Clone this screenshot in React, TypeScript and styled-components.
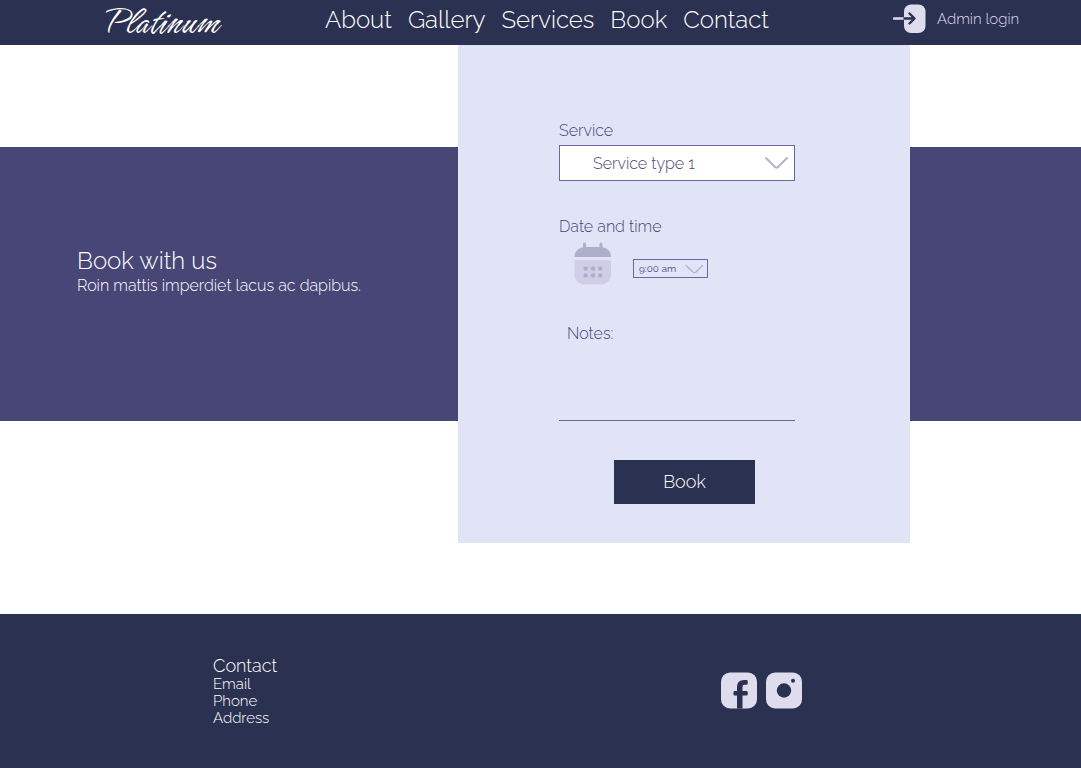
import React from 'react';
import styled, { createGlobalStyle } from 'styled-components';

const navy = '#2b3150';
const indigo = '#484677';
const lilac = '#e1e4f7';
const mist = '#dfdded';
const violet = '#6a68a3';

const GlobalStyle = createGlobalStyle`
  *, *::before, *::after { box-sizing: border-box; }
  body {
    margin: 0;
    background: #fff;
    font-family: Raleway, Lato, "Open Sans", sans-serif;
    font-weight: 300;
    font-size: 16px;
    line-height: 20px;
  }
  button, select, textarea { font: inherit; color: inherit; }
`;

const Page = styled.div`
  min-height: 100vh;
  display: flex;
  flex-direction: column;
`;

const Header = styled.header`
  display: grid;
  grid-template-columns: 325fr 568fr 188fr;
  align-items: center;
  min-height: 45px;
  background: ${navy};
  color: #fff;
`;

const Logo = styled.a`
  padding-left: 106px;
  color: #fff;
  font-family: Hurricane, "Brush Script MT", "Liberation Serif", cursive;
  font-weight: 400;
  font-size: 42px;
  line-height: 45px;
  text-decoration: none;
`;

const Nav = styled.nav`
  display: flex;
  gap: 16px;
  padding-bottom: 5px;
`;

const NavLink = styled.a`
  color: #fff;
  font-size: 24px;
  line-height: 30px;
  text-decoration: none;
`;

const LoginLink = styled.a`
  display: flex;
  align-items: center;
  gap: 11px;
  padding-bottom: 7px;
  color: ${mist};
  font-size: 15px;
  white-space: nowrap;
  text-decoration: none;
`;

const Main = styled.main`
  flex: 1;
  display: grid;
  grid-template-columns: 458fr 452fr 171fr;
  grid-template-rows: 102px 274px auto;
  padding-bottom: 71px;
`;

const Band = styled.section`
  grid-column: 1 / -1;
  grid-row: 2;
  display: flex;
  flex-direction: column;
  justify-content: center;
  padding: 0 0 26px 77px;
  background: ${indigo};
  color: #fff;
`;

const BandTitle = styled.h1`
  margin: 0;
  font-size: 24px;
  font-weight: 300;
  line-height: 30px;
`;

const BandText = styled.p`
  margin: 0;
`;

const BookingForm = styled.form`
  grid-column: 2;
  grid-row: 1 / 4;
  display: flex;
  flex-direction: column;
  padding: 76px 115px 39px 101px;
  background: ${lilac};
  color: ${indigo};
`;

const Field = styled.div<{ $space: number }>`
  display: flex;
  flex-direction: column;
  gap: 4px;
  margin-bottom: ${p => p.$space}px;
`;

const SelectBox = styled.div`
  display: grid;
  align-items: center;
  > * { grid-area: 1 / 1; }
  > svg { justify-self: end; pointer-events: none; }
`;

const ServiceSelect = styled.select`
  appearance: none;
  width: 100%;
  height: 36px;
  padding: 1px 40px 0 33px;
  border: 1px solid ${violet};
  border-radius: 0;
  background: #fff;
`;

const TimeSelect = styled.select`
  appearance: none;
  width: 75px;
  height: 19px;
  padding: 0 24px 0 5px;
  border: 1px solid ${violet};
  border-radius: 0;
  background: ${lilac};
  font-size: 10px;
  font-weight: 400;
  line-height: 16px;
`;

const DateRow = styled.div`
  display: flex;
  align-items: center;
  gap: 21px;
  padding-left: 15px;
  > ${SelectBox} { margin-top: 11px; }
`;

const CalendarButton = styled.button`
  display: block;
  padding: 0;
  border: 0;
  background: none;
  > svg { display: block; }
`;

const NotesLabel = styled.label`
  padding-left: 8px;
`;

const Notes = styled.textarea`
  height: 73px;
  padding: 0 8px;
  border: 0;
  border-bottom: 1px solid ${violet};
  border-radius: 0;
  background: transparent;
  resize: none;
`;

const BookButton = styled.button`
  width: 141px;
  height: 44px;
  margin-left: 55px;
  border: 0;
  background: ${navy};
  color: #fff;
  font-size: 18px;
`;

const Footer = styled.footer`
  display: grid;
  grid-template-columns: 721fr 360fr;
  align-items: center;
  min-height: 154px;
  background: ${navy};
  color: #fff;
`;

const ContactBlock = styled.div`
  padding-left: 213px;
`;

const ContactTitle = styled.h2`
  margin: 0;
  font-size: 18px;
  font-weight: 300;
  line-height: 20px;
`;

const ContactList = styled.ul`
  margin: 0;
  padding: 0;
  list-style: none;
  font-size: 15px;
  line-height: 17px;
`;

const Social = styled.div`
  display: flex;
  gap: 9px;
  padding-bottom: 1px;
  a, svg { display: block; }
`;

const Chevron = ({ small = false }: { small?: boolean }) => (
  <svg width={small ? 23 : 30} height={small ? 10 : 14} viewBox={small ? '0 0 23 10' : '0 0 30 14'} fill="none" stroke="#b3b2d0" strokeWidth={small ? 1.3 : 2} strokeLinecap="round" aria-hidden="true">
    <path d={small ? 'M1 1.5 L8 8 Q9.500 9.200 11 8 L17.500 1.5' : 'M1 2 L9.500 10.500 Q11.500 12.800 13.500 10.500 L22 2'} />
  </svg>
);

const LoginIcon = () => (
  <svg width="33" height="30" viewBox="0 0 33 30" fill="none" aria-hidden="true">
    <rect x="11" y=".5" width="21.5" height="28.5" rx="7" fill={mist} />
    <path d="M1 14.500H12" stroke={mist} strokeWidth="2.4" strokeLinecap="round" />
    <path d="M11.5 14.500H21M16.5 9.500L21.5 14.500L16.5 19.500" stroke={navy} strokeWidth="2.4" strokeLinecap="round" strokeLinejoin="round" />
  </svg>
);

const CalendarIcon = () => (
  <svg width="38" height="44" viewBox="0 0 38 44" aria-hidden="true">
    <path d="M10.5 3V8M27 3V8" stroke="#afaecb" strokeWidth="3" strokeLinecap="round" />
    <path d="M.5 16C.5 10 5 6 11 6H26.500C32.500 6 37 10 37 16H.5Z" fill="#afaecb" />
    <path d="M.5 19.200H37V32.500C37 39.500 33 43.500 26 43.500H11.500C4.500 43.500.5 39.500.5 32.500Z" fill="#cfcee6" />
    {[27.5, 34.5].map(y => [11.7, 19, 26.2].map(x => <circle key={`${x}-${y}`} cx={x} cy={y} r="2.2" fill="#afaecb" />))}
  </svg>
);

const FacebookIcon = () => (
  <svg width="36" height="37" viewBox="0 0 36 37" aria-hidden="true">
    <rect y=".5" width="36" height="36" rx="9" fill={mist} />
    <path d="M16 36.500V23.500H13.500Q12.500 23.500 12.500 22.500V20Q12.500 19 13.500 19H16V15Q16 8 23 8H25.500Q26.700 8 26.700 9.200V11.600Q26.700 12.800 25.500 12.800H23.500Q21.500 12.800 21.500 15V19H25.500Q26.700 19 26.700 20.200V22.300Q26.700 23.500 25.500 23.500H21.500V36.500Z" fill={navy} />
  </svg>
);

const InstagramIcon = () => (
  <svg width="36" height="37" viewBox="0 0 36 37" aria-hidden="true">
    <rect y=".5" width="36" height="36" rx="9" fill={mist} />
    <circle cx="18" cy="18.500" r="7.200" fill={navy} />
    <circle cx="27" cy="8.700" r="2" fill={navy} />
  </svg>
);

const links = ['About', 'Gallery', 'Services', 'Book', 'Contact'];

export default function App() {
  return (
    <Page>
      <GlobalStyle />
      <Header>
        <Logo href="#home">Platinum</Logo>
        <Nav>
          {links.map(name => <NavLink key={name} href={`#${name.toLowerCase()}`}>{name}</NavLink>)}
        </Nav>
        <LoginLink href="#login"><LoginIcon />Admin login</LoginLink>
      </Header>
      <Main>
        <Band>
          <BandTitle>Book with us</BandTitle>
          <BandText>Roin mattis imperdiet lacus ac dapibus.</BandText>
        </Band>
        <BookingForm onSubmit={e => e.preventDefault()}>
          <Field $space={36}>
            <label htmlFor="service">Service</label>
            <SelectBox>
              <ServiceSelect id="service">
                <option>Service type 1</option>
              </ServiceSelect>
              <Chevron />
            </SelectBox>
          </Field>
          <Field $space={39}>
            <label htmlFor="time">Date and time</label>
            <DateRow>
              <CalendarButton type="button" aria-label="Choose a date"><CalendarIcon /></CalendarButton>
              <SelectBox>
                <TimeSelect id="time">
                  <option>9:00 am</option>
                </TimeSelect>
                <Chevron small />
              </SelectBox>
            </DateRow>
          </Field>
          <Field $space={39}>
            <NotesLabel htmlFor="notes">Notes:</NotesLabel>
            <Notes id="notes" />
          </Field>
          <BookButton type="submit">Book</BookButton>
        </BookingForm>
      </Main>
      <Footer>
        <ContactBlock>
          <ContactTitle>Contact</ContactTitle>
          <ContactList>
            <li>Email</li>
            <li>Phone</li>
            <li>Address</li>
          </ContactList>
        </ContactBlock>
        <Social>
          <a href="#facebook" aria-label="Facebook"><FacebookIcon /></a>
          <a href="#instagram" aria-label="Instagram"><InstagramIcon /></a>
        </Social>
      </Footer>
    </Page>
  );
}
